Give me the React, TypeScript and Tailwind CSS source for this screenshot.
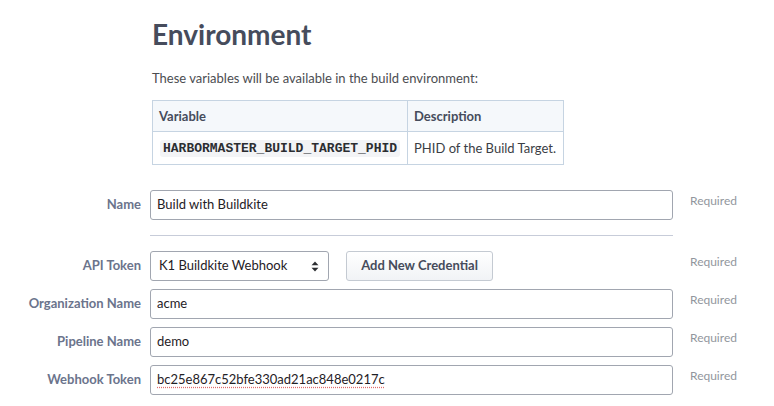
import React from 'react';

const labelCls = 'w-[141px] shrink-0 text-right text-[13px] font-bold text-[#6b748c]';
const boxCls =
  'h-[30px] flex items-center rounded-[3px] border border-[#a1a6b0] bg-white px-[6px] text-[13px] text-[#1f2126]';

function Required() {
  return <div className="ml-[17px] self-start pt-[3px] text-[12px] leading-4 text-[#92969d]">Required</div>;
}

function FieldRow({ label, children }: { label: string; children: React.ReactNode }) {
  return (
    <div className="flex items-center">
      <div className={labelCls}>{label}</div>
      <div className="ml-[9px] w-[523px] shrink-0">{children}</div>
      <Required />
    </div>
  );
}

function UpDown() {
  return (
    <svg width="8" height="11" viewBox="0 0 8 11" className="text-[#2b2d31]">
      <path d="M4 0.5 L7.5 4.2 L0.5 4.2 Z" fill="currentColor" />
      <path d="M4 10.5 L7.5 6.8 L0.5 6.8 Z" fill="currentColor" />
    </svg>
  );
}

export default function App() {
  return (
    <div className="min-h-[406px] w-[774px] bg-white font-['Lato','Noto_Sans',sans-serif] text-[#464c5c]">
      {/* Environment header + variable table */}
      <div className="ml-[152px] pt-[17px]">
        <h1 className="text-[28px] leading-[34px] font-bold text-[#464c5c]">Environment</h1>
        <p className="mt-[18px] text-[13px] leading-[18px] text-[#4b4d51]">
          These variables will be available in the build environment:
        </p>
        <table className="mt-[13px] border-collapse text-[13px] leading-[18px]">
          <thead>
            <tr className="bg-[#f5f8fb]">
              <th className="w-[255px] border border-[#c6d4e2] px-[6px] py-[6px] text-left font-bold text-[#464c5c]">
                Variable
              </th>
              <th className="w-[156px] border border-[#c6d4e2] px-[6px] py-[6px] text-left font-bold text-[#464c5c]">
                Description
              </th>
            </tr>
          </thead>
          <tbody>
            <tr>
              <td className="border border-[#c6d4e2] px-[7px] py-[6px]">
                <code className="rounded-[3px] bg-[#f3f4f6] px-[3px] py-[1px] font-['Liberation_Mono','DejaVu_Sans_Mono',monospace] text-[13px] font-bold text-[#2b2d31]">
                  HARBORMASTER_BUILD_TARGET_PHID
                </code>
              </td>
              <td className="border border-[#c6d4e2] px-[6px] py-[6px] text-[#3b3e45]">PHID of the Build Target.</td>
            </tr>
          </tbody>
        </table>
      </div>

      {/* Form */}
      <div className="mt-[25px] flex flex-col">
        <FieldRow label="Name">
          <div className={boxCls}>Build with Buildkite</div>
        </FieldRow>

        <div className="ml-[150px] mt-[15px] mb-[15px] h-px w-[523px] bg-[#c7ccd9]" />

        <div className="flex flex-col gap-[8px]">
          <FieldRow label="API Token">
            <div className="flex items-center">
              <div className="flex h-[30px] w-[179px] items-center justify-between rounded-[3px] border border-[#a1a6b0] bg-white pl-[8px] pr-[9px] text-[13px] text-[#1f2126]">
                <span>K1 Buildkite Webhook</span>
                <UpDown />
              </div>
              <button className="ml-[17px] h-[30px] w-[147px] rounded-[3px] border border-[#c4cad2] bg-gradient-to-b from-white to-[#f1f3f6] text-[13px] font-bold text-[#464c5c]">
                Add New Credential
              </button>
            </div>
          </FieldRow>
          <FieldRow label="Organization Name">
            <div className={boxCls}>acme</div>
          </FieldRow>
          <FieldRow label="Pipeline Name">
            <div className={boxCls}>demo</div>
          </FieldRow>
          <FieldRow label="Webhook Token">
            <div className={boxCls}>
              <span className="underline decoration-dotted decoration-[#e06c6c] underline-offset-[3px]">
                bc25e867c52bfe330ad21ac848e0217c
              </span>
            </div>
          </FieldRow>
        </div>
      </div>
    </div>
  );
}
